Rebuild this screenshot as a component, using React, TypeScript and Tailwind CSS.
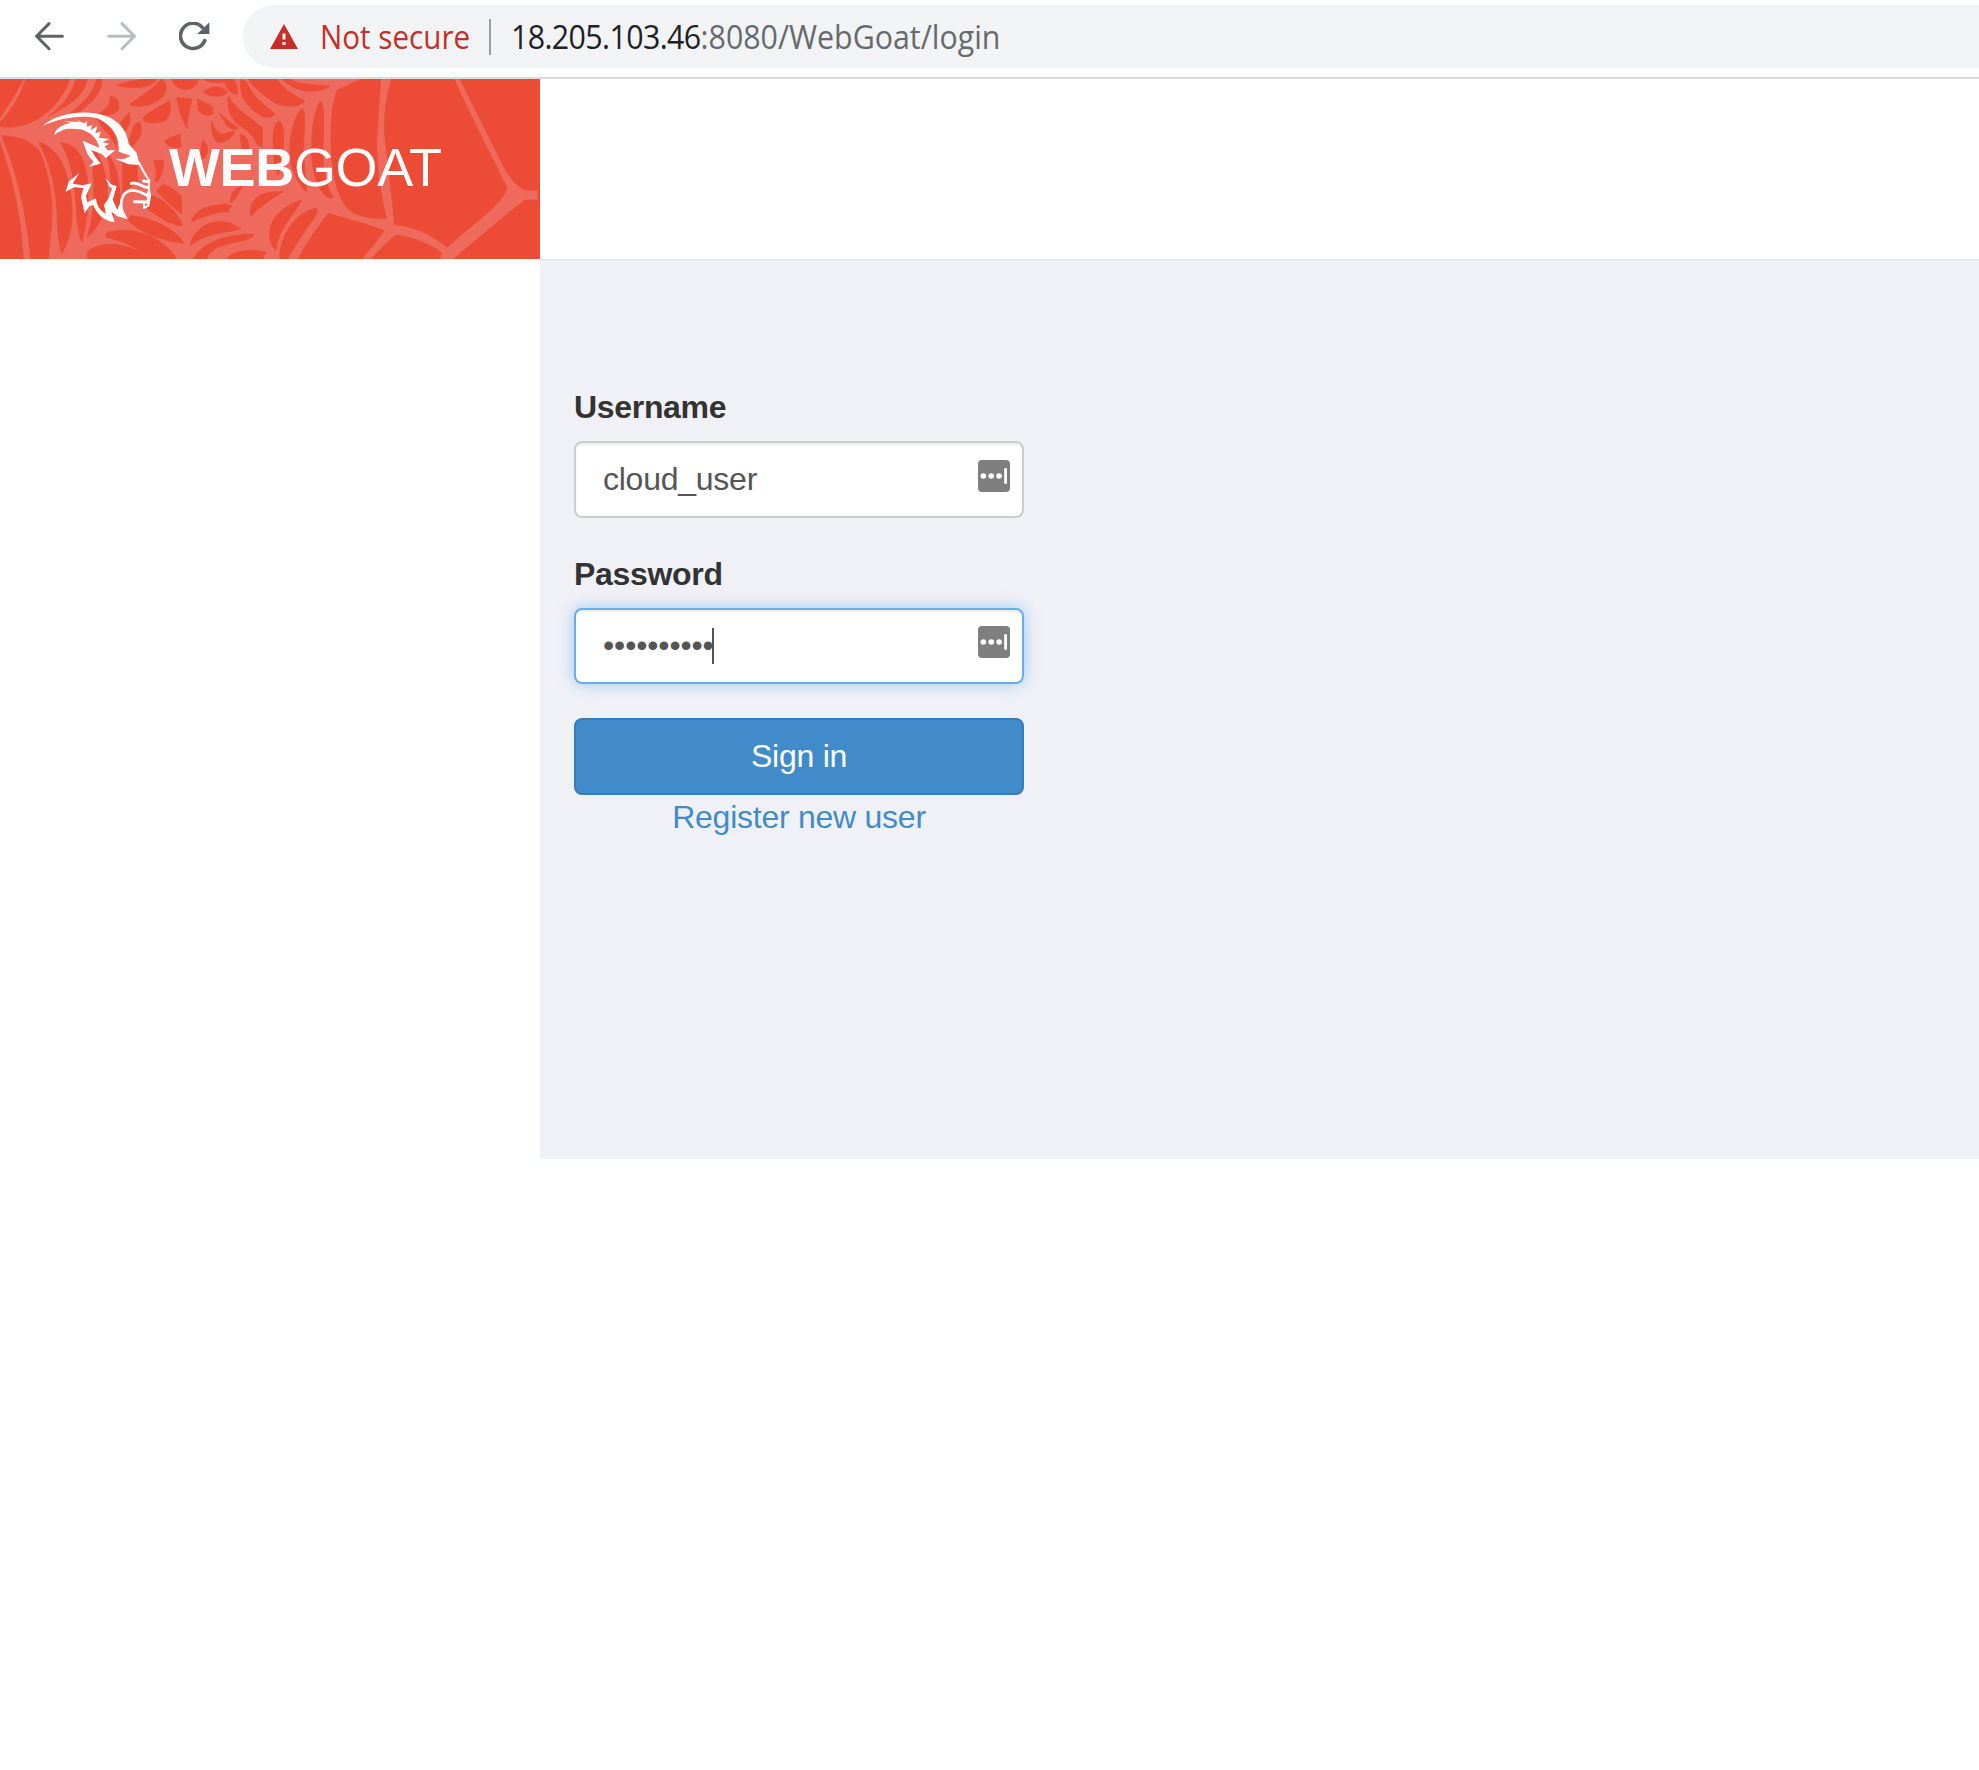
const webCells = [
  'M0 0H70C50 40 25 80 0 115Z',
  'M78 0H210C190 55 150 105 90 132C60 145 30 146 0 142V130C35 95 60 50 78 0Z',
  'M228 0H262C258 25 240 55 200 80L145 112C190 80 215 45 228 0Z',
  'M290 0H305C310 30 285 65 235 102L210 102C255 70 280 40 290 0Z',
  'M330 52C350 50 362 75 355 92C340 108 330 110 290 108C320 90 333 75 330 52Z',
  'M0 190C30 280 60 380 70 540H0Z',
  'M5 170C60 170 100 190 120 220C150 290 165 380 150 480L145 540H92C80 400 50 280 5 170Z',
  'M115 188C150 200 185 230 200 290C220 360 222 430 205 480L185 525C175 490 172 450 172 420C170 330 150 250 115 188Z',
  'M180 190C220 195 245 220 257 270C270 340 265 420 245 490C225 430 232 380 222 320C215 260 200 220 180 190Z',
  'M275 200C305 230 325 300 322 350C318 400 300 440 262 475C275 430 285 380 280 310C278 260 280 230 275 200Z',
  'M320 225C345 240 360 300 362 370C355 400 340 415 322 425C335 370 340 300 320 225Z',
  'M368 245L412 255V308C390 325 380 330 368 350Z',
  'M290 118C330 130 350 160 350 205L330 170L310 150Z',
  'M350 20C380 10 400 0 470 0C450 30 400 30 350 20Z',
  'M390 76C420 50 450 40 485 0C510 20 500 50 470 67C440 85 400 85 390 76Z',
  'M428 118C440 100 480 85 508 65C515 90 513 110 495 125C470 135 430 135 428 118Z',
  'M515 0H595C595 20 575 32 555 32C535 30 520 18 515 0Z',
  'M530 55L575 60C570 100 560 110 562 150C545 120 535 90 530 55Z',
  'M592 60C610 70 630 75 638 85V105C620 115 600 105 594 90Z',
  'M610 38C640 20 660 15 683 40C665 56 630 56 610 38Z',
  'M610 0H672C695 12 630 18 610 0Z',
  'M635 125C640 145 650 160 668 165L705 155C700 180 665 195 650 188C635 170 632 150 635 125Z',
  'M658 103L715 148L700 152L680 140Z',
  'M493 187C510 175 530 168 540 165L543 205C520 210 500 200 493 187Z',
  'M600 245C605 220 600 200 610 183C620 200 630 210 615 235Z',
  'M388 180C400 150 400 130 420 130C430 160 420 180 395 205Z',
  'M362 130L388 100C395 130 385 150 370 160Z',
  'M460 245L490 243C492 280 480 300 468 310C465 300 475 270 460 245Z',
  'M490 315C515 330 535 335 545 355V405C520 385 495 365 470 335Z',
  'M455 350C480 355 530 390 548 440C520 445 470 410 440 388Z',
  'M390 410C430 410 520 440 552 492C510 490 430 470 385 425Z',
  'M318 462C380 440 480 460 530 540H445C420 510 370 485 318 475Z',
  'M262 520C290 490 350 490 400 510C430 520 440 535 445 540H262Z',
  'M575 430C580 390 640 370 695 380C695 400 620 400 575 430Z',
  'M570 500C580 440 660 400 722 450C690 460 620 460 570 500Z',
  'M580 540C610 485 690 465 762 466C755 490 690 485 645 510C630 520 622 530 620 540Z',
  'M680 540C700 510 770 510 798 520L788 540Z',
  'M670 0H700C712 15 715 35 712 48C690 45 675 25 670 0Z',
  'M722 0L740 10C760 60 800 80 825 105C820 115 800 118 785 112C745 90 715 50 722 0Z',
  'M745 0H830C850 30 880 50 915 65C900 85 860 85 830 75C790 50 765 30 745 0Z',
  'M845 0H870C900 20 950 15 990 22C960 40 920 40 895 30C870 22 855 10 845 0Z',
  'M685 50C705 90 750 115 787 145V205L770 195C765 175 740 150 710 135C690 110 680 80 685 50Z',
  'M720 165C740 170 750 190 745 215L725 210Z',
  'M820 200C815 150 828 127 838 126C855 140 852 170 850 210L835 290C825 270 820 240 820 200Z',
  'M870 210C870 150 890 100 908 88C920 110 910 180 910 220L920 340C880 300 868 250 870 210Z',
  'M935 200C935 130 950 80 962 65C975 80 972 150 968 230C970 290 985 330 1000 355C970 370 930 290 935 200Z',
  'M690 372C690 345 705 325 728 322C715 345 705 365 690 372Z',
  'M752 412C745 370 770 335 850 338C830 350 780 380 752 412Z',
  'M828 515C795 480 795 400 905 362C890 400 830 450 828 515Z',
  'M840 540C835 500 870 400 950 388C955 410 930 430 905 470L862 540Z',
  'M660 378C680 370 690 378 685 400L660 395Z',
  'M1085 0H1142L1130 190C1130 280 1145 360 1160 418C1120 420 1080 415 1050 395C1010 360 990 270 993 150C994 90 1005 50 1012 33Z',
  'M1175 0H1362C1420 130 1490 260 1520 325C1522 365 1400 450 1342 505C1290 460 1230 440 1184 437C1175 350 1165 250 1155 180C1150 130 1155 60 1175 0Z',
  'M1380 0H1620V540H1360C1440 475 1500 420 1575 363H1614V334L1575 333C1550 320 1530 300 1512 265Z',
  'M1190 468C1240 475 1300 500 1325 522L1318 540H1115C1140 510 1165 485 1190 468Z',
  'M985 403C1040 420 1120 440 1152 455C1130 490 1100 520 1085 540H895C920 490 950 450 985 403Z',
];

function SpiderWeb() {
  return (
    <svg className="absolute inset-0 h-full w-full" viewBox="0 0 1620 540" aria-hidden="true">
      <rect width="1620" height="540" fill="#ee6a5d" />
      {webCells.map((d) => (
        <path key={d} d={d} fill="#ec4b35" stroke="#ec4b35" strokeWidth="2" strokeLinejoin="round" />
      ))}
    </svg>
  );
}

function Goat() {
  return (
    <svg className="absolute inset-0 h-full w-full" viewBox="0 0 1620 540" fill="#fff" aria-hidden="true">
      <path d="M128 140C165 108 230 94 285 103C350 113 380 150 386 195L410 222L419 258L385 256L345 239L372 240L392 230L356 218C360 178 340 140 292 118C260 108 190 112 128 140Z" />
      <path d="M163 168C165 148 190 135 215 132L190 127L240 129L225 120L252 133L262 127L260 143L277 138L272 153L292 142L286 163L302 158L297 176L328 180L308 190L328 194L314 202L322 213L346 214L335 222L318 237L305 225L274 213L285 232L302 254L268 263L280 248L262 225L248 185L298 206C290 175 270 158 240 151C205 146 185 150 163 168Z" />
      <path d="M238 281L206 308L197 338L222 325L250 327L243 355L254 403L268 382L280 378C290 405 310 425 344 430L334 398L352 412L383 420C368 400 360 385 358 375L352 392L338 362L350 322L333 316L316 297L328 323L336 328L326 358L312 378L318 405C300 395 290 380 288 358L262 370L258 350L275 313L248 319L218 314Z" />
      <g fill="none" stroke="#fff" strokeLinecap="round" strokeLinejoin="round">
        <path strokeWidth="6" d="M416 250L432 280L448 305L446 325L450 350L445 380L432 387V372" />
        <path strokeWidth="9" d="M394 313C410 306 424 324 444 326M430 306L444 308" />
        <path strokeWidth="8" d="M376 415C355 385 360 336 396 334C418 334 430 345 444 350" />
        <path strokeWidth="9" d="M404 368L442 369M445 340V372" />
      </g>
    </svg>
  );
}

function BrowserBar() {
  return (
    <div className="flex h-[79px] items-start border-b-2 border-[#dadce0] bg-white pt-[5px] tracking-normal">
      <div className="flex h-[63px] w-[243px] shrink-0 items-center pl-[35px]">
        <svg className="mr-[43px] h-[29px] w-[29px]" viewBox="0 0 29 29" fill="none" stroke="#5f6368" strokeWidth="3" strokeLinecap="round">
          <path d="M27.4 14.2H2M14 1.6L1.6 14.2L14 26.8" />
        </svg>
        <svg className="mr-[43px] h-[29px] w-[29px]" viewBox="0 0 29 29" fill="none" stroke="#babcbe" strokeWidth="3" strokeLinecap="round">
          <path d="M1.6 14.2H27M15 1.6L27.4 14.2L15 26.8" />
        </svg>
        <svg className="h-[29px] w-[31px]" viewBox="0 0 31 29" fill="none">
          <path d="M25.7 18.7A12.6 12.6 0 1 1 23.2 5.2" stroke="#5f6368" strokeWidth="3.6" strokeLinecap="round" />
          <path d="M30.4 0.2V12H18.2Z" fill="#5f6368" />
        </svg>
      </div>
      <div className="flex h-[63px] flex-1 items-center rounded-l-full bg-[#f1f3f4] pl-[27px] font-['Open_Sans',sans-serif] text-[32px] leading-none">
        <svg className="h-[25px] w-7 shrink-0" viewBox="0 0 28 25">
          <path d="M14 0L28 25H0Z" fill="#c5302a" />
          <path d="M14 9.5V15.5M14 18V21" stroke="#f1f3f4" strokeWidth="3" />
        </svg>
        <div className="ml-[22px] w-[169px] shrink-0">
          <span className="inline-block origin-left scale-x-[0.925] whitespace-nowrap text-[#c5302a]">Not secure</span>
        </div>
        <div className="h-9 w-0.5 bg-[#9b9da0]" />
        <div className="ml-[20px]">
          <span className="inline-block origin-left scale-x-[0.948] whitespace-nowrap text-[#66696d]">
            <span className="tracking-[-0.63px] text-[#202124]">18.205.103.46</span>:8080/WebGoat/login
          </span>
        </div>
      </div>
    </div>
  );
}

function FillIcon() {
  return (
    <svg className="mr-3 h-8 w-8" viewBox="0 0 32 32">
      <rect width="32" height="32" rx="4" fill="#7f7f7f" />
      <g fill="#fff">
        <circle cx="5.3" cy="16" r="2.8" />
        <circle cx="13.2" cy="16" r="2.8" />
        <circle cx="21.1" cy="16" r="2.8" />
        <rect x="26.2" y="8" width="2.8" height="16" rx="1.2" />
      </g>
    </svg>
  );
}

export default function App() {
  return (
    <div className="flex h-[1770px] w-full flex-col overflow-hidden bg-white font-['Liberation_Sans',Arial,sans-serif] text-[32px] tracking-[-0.25px]">
      <BrowserBar />
      <header className="flex h-[180px] shrink-0">
        <div className="relative flex w-[540px] items-center overflow-hidden bg-[#ec4b35] pb-[5px] pl-[169px]">
          <SpiderWeb />
          <Goat />
          <div className="relative text-[54px] leading-none tracking-[-0.35px] text-white">
            <b>WEB</b>GOAT
          </div>
        </div>
      </header>
      <main className="ml-[540px] h-[900px] shrink-0 border-t-2 border-[#e7e7ec] bg-[#f0f1f7] pl-[34px]">
        <form className="flex w-[450px] flex-col pt-[124px]">
          <label className="h-[56px] font-bold leading-[44px] tracking-[-0.32px] text-[#333]">Username</label>
          <div className="flex h-[77px] justify-between rounded-lg border-2 border-[#ccc] bg-white shadow-[inset_0_2px_2px_rgba(0,0,0,0.075)]">
            <span className="pl-[27px] leading-[72px] text-[#555]">cloud_user</span>
            <div className="pt-[17px]">
              <FillIcon />
            </div>
          </div>
          <label className="mt-[33px] h-[57px] font-bold leading-[46px] tracking-[-0.32px] text-[#333]">Password</label>
          <div className="flex h-[76px] justify-between rounded-lg border-2 border-[#66afe9] bg-white shadow-[inset_0_2px_2px_rgba(0,0,0,0.075),0_0_16px_rgba(102,175,233,0.6)]">
            <div className="flex pl-[27px] text-[#555]">
              <span className="w-[109px] leading-[70px] tracking-[-0.14px]">••••••••••</span>
              <span className="mt-[18px] h-9 w-0.5 bg-[#555]" />
            </div>
            <div className="pt-4">
              <FillIcon />
            </div>
          </div>
          <button className="mt-[34px] h-[77px] rounded-lg border-2 border-[#357ebd] bg-[#428bca] pb-0.5 tracking-[-0.25px] text-white" type="button">
            Sign in
          </button>
          <a className="text-center leading-[44px] text-[#428bca]">Register new user</a>
        </form>
      </main>
    </div>
  );
}
